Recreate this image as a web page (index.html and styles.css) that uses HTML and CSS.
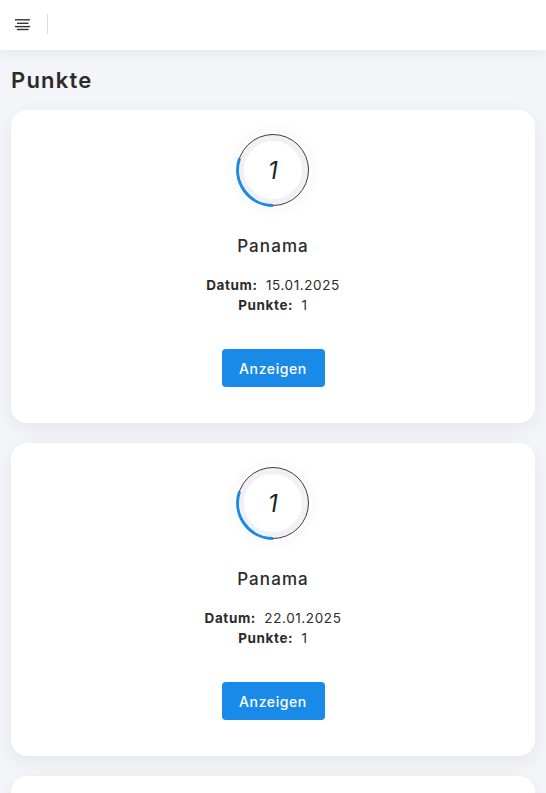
FILE: index.html
```html
<!DOCTYPE html>
<html lang="de">
<head>
<meta charset="utf-8">
<link rel="stylesheet" href="styles.css">
</head>
<body>
<header class="topbar">
  <button class="menu-btn" aria-label="Menü">
    <svg width="16" height="12" viewBox="0 0 16 12"><g stroke="#333" stroke-width="1.4"><line x1="0" y1="0.8" x2="15" y2="0.8"/><line x1="2" y1="4.3" x2="13.5" y2="4.3"/><line x1="0" y1="7.6" x2="15" y2="7.6"/><line x1="2" y1="10.5" x2="13.5" y2="10.5"/></g></svg>
  </button>
  <span class="divider"></span>
</header>
<main class="content">
  <h1 class="page-title">Punkte</h1>
  <div class="cards">
    <section class="card">
      <div class="ring">
        <svg width="78" height="78" viewBox="0 0 78 78">
          <circle cx="39" cy="39" r="32" fill="none" stroke="#f0f0f5" stroke-width="6"/>
          <circle cx="39" cy="39" r="35.5" fill="none" stroke="#3a3a3a" stroke-width="1"/>
          <path d="M39 74.5 A35.5 35.5 0 0 1 5.5 27.5" fill="none" stroke="#1a8ae8" stroke-width="3"/>
        </svg>
        <span class="ring-value">1</span>
      </div>
      <h2 class="card-title">Panama</h2>
      <div class="meta">
        <div class="meta-row"><b>Datum:</b> 15.01.2025</div>
        <div class="meta-row"><b>Punkte:</b> 1</div>
      </div>
      <button class="btn">Anzeigen</button>
    </section>
    <section class="card">
      <div class="ring">
        <svg width="78" height="78" viewBox="0 0 78 78">
          <circle cx="39" cy="39" r="32" fill="none" stroke="#f0f0f5" stroke-width="6"/>
          <circle cx="39" cy="39" r="35.5" fill="none" stroke="#3a3a3a" stroke-width="1"/>
          <path d="M39 74.5 A35.5 35.5 0 0 1 5.5 27.5" fill="none" stroke="#1a8ae8" stroke-width="3"/>
        </svg>
        <span class="ring-value">1</span>
      </div>
      <h2 class="card-title">Panama</h2>
      <div class="meta">
        <div class="meta-row"><b>Datum:</b> 22.01.2025</div>
        <div class="meta-row"><b>Punkte:</b> 1</div>
      </div>
      <button class="btn">Anzeigen</button>
    </section>
    <section class="card card-empty"></section>
  </div>
</main>
</body>
</html>
```
FILE: styles.css
```css
html, body {
  margin: 0;
  padding: 0;
}
body {
  background: #f4f5f8;
  font-family: "Inter", "Open Sans", sans-serif;
  color: #2b2b2b;
  height: 793px;
  overflow: hidden;
}
.topbar {
  height: 50px;
  background: #fff;
  display: flex;
  align-items: center;
  box-shadow: 0 2px 12px rgba(40, 40, 80, 0.08);
  position: relative;
  z-index: 1;
}
.menu-btn {
  border: 0;
  background: none;
  padding: 0;
  margin-left: 15px;
  margin-top: -1px;
  display: flex;
  width: 16px;
  height: 12px;
}
.divider {
  width: 1px;
  height: 20px;
  background: #dddde2;
  margin-left: 16px;
  margin-top: -2px;
}
.content {
  padding: 0 11px;
}
.page-title {
  margin: 16px 0 16px;
  font-size: 22px;
  font-weight: 600;
  line-height: 28px;
  letter-spacing: 1.2px;
  color: #2b2b2b;
}
.cards {
  display: flex;
  flex-direction: column;
  gap: 20px;
}
.card {
  background: #fff;
  border-radius: 16px;
  box-shadow: 0 6px 18px rgba(40, 40, 90, 0.07);
  display: flex;
  flex-direction: column;
  align-items: center;
  padding: 21px 0 36px;
}
.card-empty {
  height: 200px;
}
.ring {
  position: relative;
  width: 78px;
  height: 78px;
  border-radius: 50%;
  box-shadow: 0 0 14px rgba(40, 40, 90, 0.05);
}
.ring svg {
  display: block;
}
.ring-value {
  position: absolute;
  inset: 0;
  display: flex;
  align-items: center;
  justify-content: center;
  font-size: 24px;
  font-style: italic;
  color: #1f1f1f;
}
.card-title {
  margin: 25px 0 0;
  font-size: 17px;
  font-weight: 500;
  line-height: 24px;
  letter-spacing: 1.1px;
}
.meta {
  margin-top: 17px;
  display: flex;
  flex-direction: column;
  align-items: center;
  font-size: 13.5px;
  line-height: 20px;
  letter-spacing: 0.6px;
}
.meta-row b {
  font-weight: 700;
  margin-right: 4px;
}
.btn {
  margin-top: 34px;
  width: 103px;
  height: 38px;
  border: 0;
  border-radius: 4px;
  background: #1a8ae8;
  color: #fff;
  font-family: inherit;
  font-size: 14px;
  font-weight: 500;
  letter-spacing: 0.6px;
}
```
